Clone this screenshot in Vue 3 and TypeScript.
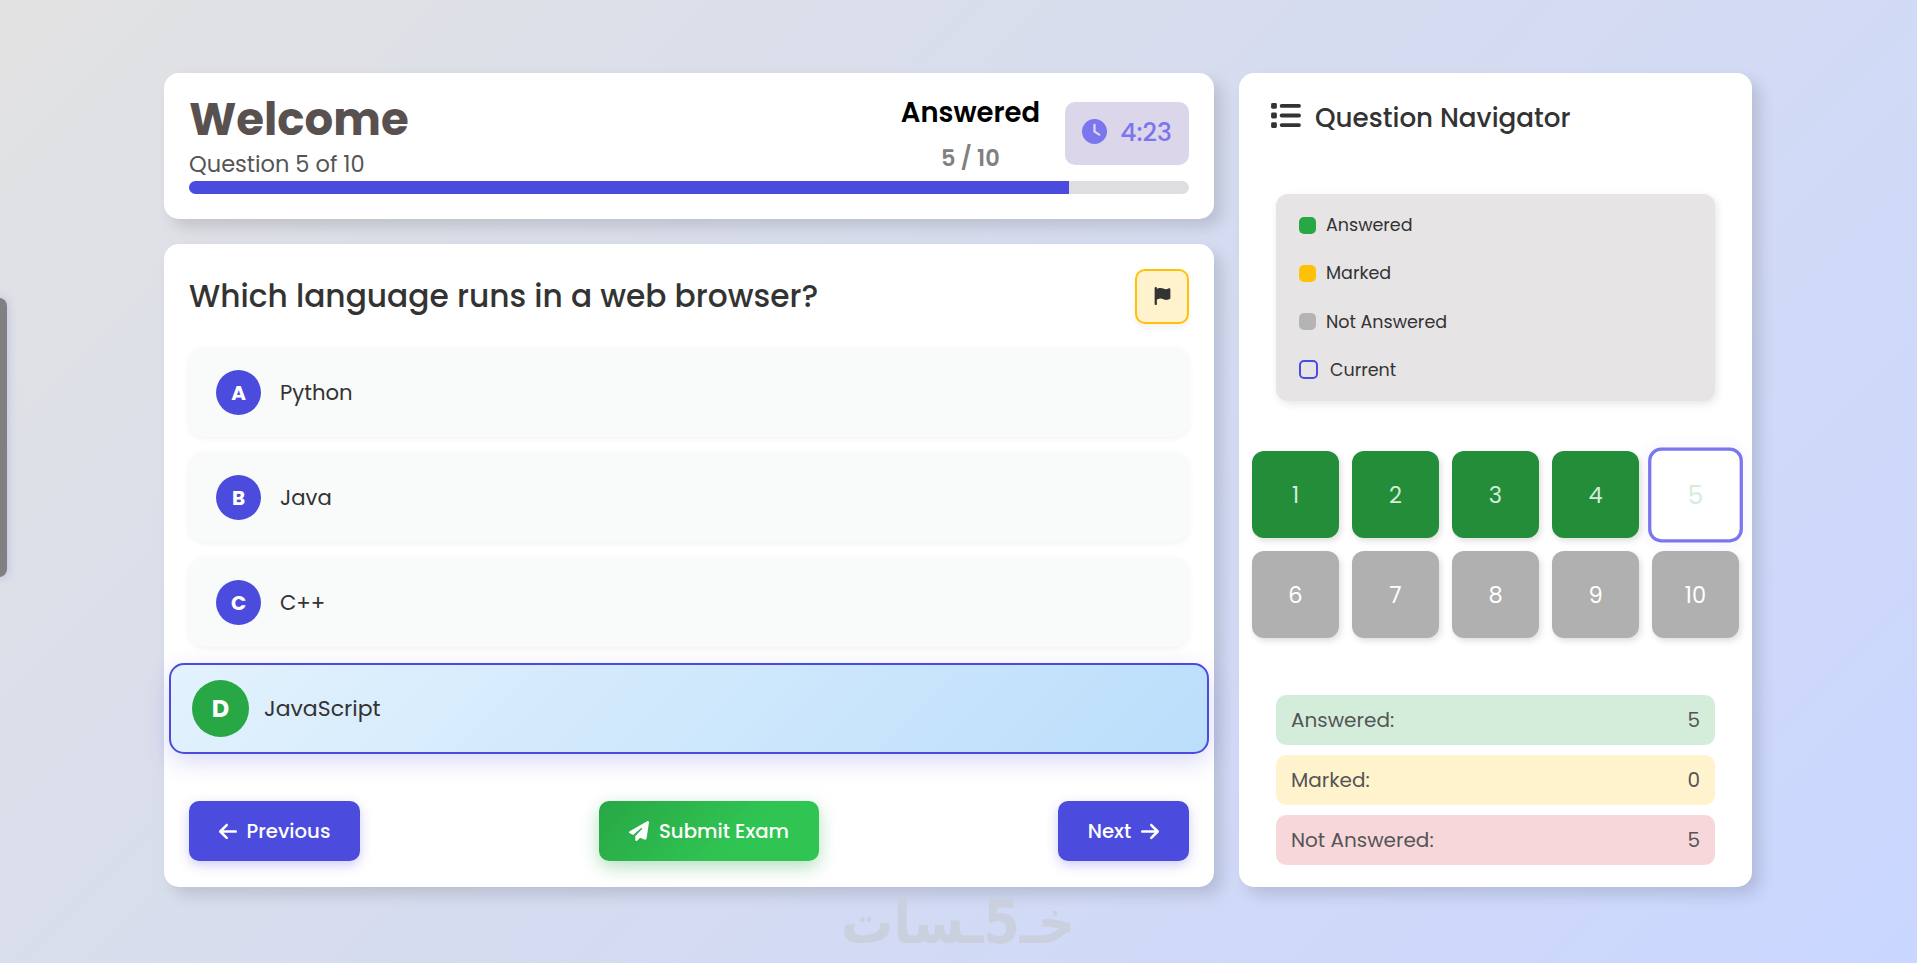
<script setup lang="ts">
import { computed, ref } from 'vue'

/* ---- Types ---- */
type Status = 'answered' | 'marked' | 'empty'

interface Option {
  key: string
  text: string
}

interface Question {
  id: number
  status: Status
}

/* ---- State ---- */
const current = ref(5)
const selected = ref('D')
const secondsLeft = ref(263)
const timePercent = ref(88)

const options: Option[] = [
  { key: 'A', text: 'Python' },
  { key: 'B', text: 'Java' },
  { key: 'C', text: 'C++' },
  { key: 'D', text: 'JavaScript' },
]

const questions = ref<Question[]>(
  Array.from({ length: 10 }, (_, i) => ({ id: i + 1, status: i < 5 ? 'answered' : 'empty' })),
)

const legend = [
  { cls: 'answered', label: 'Answered' },
  { cls: 'marked', label: 'Marked' },
  { cls: 'empty', label: 'Not Answered' },
  { cls: 'current', label: 'Current' },
]

/* ---- Derived ---- */
const countBy = (s: Status) => questions.value.filter(q => q.status === s).length

const stats = computed(() => [
  { cls: 'answered', label: 'Answered:', value: countBy('answered') },
  { cls: 'marked', label: 'Marked:', value: countBy('marked') },
  { cls: 'empty', label: 'Not Answered:', value: countBy('empty') },
])

const timeText = computed(() => {
  const s = secondsLeft.value
  return `${Math.floor(s / 60)}:${String(s % 60).padStart(2, '0')}`
})
</script>

<template>
  <div class="page">
    <div class="side-handle"></div>

    <div class="exam">
      <main class="main-col">
        <!-- Header -->
        <header class="card header">
          <div class="header-row">
            <div class="intro">
              <h1 class="welcome">Welcome</h1>
              <p class="position">Question {{ current }} of {{ questions.length }}</p>
            </div>
            <div class="score">
              <span class="score-label">Answered</span>
              <span class="score-value">{{ countBy('answered') }} / {{ questions.length }}</span>
            </div>
            <div class="timer">
              <svg class="timer-icon" viewBox="0 0 512 512"><path d="M256 0a256 256 0 1 1 0 512A256 256 0 1 1 256 0zM232 120l0 136c0 8 4 15.500 10.700 20l96 64c11 7.400 25.900 4.400 33.300-6.700s4.400-25.900-6.700-33.300L280 243.200 280 120c0-13.300-10.700-24-24-24s-24 10.700-24 24z" /></svg>
              <span class="timer-text">{{ timeText }}</span>
            </div>
          </div>
          <div class="progress">
            <div class="progress-fill" :style="{ width: timePercent + '%' }"></div>
          </div>
        </header>

        <!-- Question -->
        <section class="card question">
          <div class="question-head">
            <h2 class="question-title">Which language runs in a web browser?</h2>
            <button class="flag-btn" aria-label="Mark question">
              <svg viewBox="0 0 448 512"><path d="M64 32C64 14.300 49.700 0 32 0S0 14.300 0 32L0 64 0 368 0 480c0 17.700 14.300 32 32 32s32-14.300 32-32l0-128 64.300-16.100c41.100-10.300 84.600-5.500 122.500 13.400c44.200 22.100 95.500 24.800 141.700 7.400l34.700-13c12.500-4.700 20.800-16.600 20.800-30l0-247.700c0-23-24.200-38-44.800-27.700l-9.600 4.800c-46.300 23.200-100.800 23.200-147.100 0c-35.100-17.600-75.400-22-113.500-12.500L64 48l0-16z" /></svg>
            </button>
          </div>

          <div class="options">
            <div
              v-for="option in options"
              :key="option.key"
              class="option"
              :class="{ selected: option.key === selected }"
              @click="selected = option.key"
            >
              <span class="option-key">{{ option.key }}</span>
              <span class="option-text">{{ option.text }}</span>
            </div>
          </div>

          <div class="actions">
            <button class="btn" @click="current = Math.max(1, current - 1)">
              <svg class="arrow" viewBox="0 0 448 512"><path d="M9.400 233.400c-12.500 12.500-12.500 32.800 0 45.300l160 160c12.500 12.500 32.800 12.500 45.300 0s12.500-32.800 0-45.300L109.200 288 416 288c17.700 0 32-14.300 32-32s-14.300-32-32-32l-306.700 0L214.600 118.600c12.500-12.500 12.500-32.800 0-45.300s-32.800-12.500-45.300 0l-160 160z" /></svg>
              <span>Previous</span>
            </button>
            <button class="btn submit">
              <svg class="plane" viewBox="0 0 512 512"><path d="M498.100 5.600c10.100 7 15.400 19.100 13.500 31.200l-64 416c-1.500 9.700-7.400 18.200-16 23s-18.900 5.400-28 1.600L284 427.700l-68.500 74.100c-8.900 9.700-22.900 12.900-35.200 8.100S160 493.200 160 480V396.400c0-4 1.500-7.800 4.200-10.700L331.800 202.800c5.800-6.300 5.600-16-.4-22s-15.700-6.400-22-.7L106 360.800 17.700 316.600C7.100 311.300 .3 300.700 0 288.900s5.900-22.800 16.100-28.700l448-256c10.700-6.100 23.900-5.500 34 1.400z" /></svg>
              <span>Submit Exam</span>
            </button>
            <button class="btn next" @click="current = Math.min(questions.length, current + 1)">
              <span>Next</span>
              <svg class="arrow" viewBox="0 0 448 512"><path d="M438.600 278.600c12.500-12.500 12.500-32.800 0-45.300l-160-160c-12.500-12.500-32.800-12.500-45.300 0s-12.500 32.800 0 45.300L338.800 224 32 224c-17.700 0-32 14.300-32 32s14.300 32 32 32l306.700 0L233.400 393.400c-12.500 12.500-12.500 32.800 0 45.300s32.800 12.500 45.300 0l160-160z" /></svg>
            </button>
          </div>
        </section>
      </main>

      <!-- Navigator -->
      <aside class="card navigator">
        <div class="nav-head">
          <svg class="list-icon" viewBox="16 48 496 416">
            <rect x="16" y="48" width="96" height="96" rx="24" />
            <rect x="16" y="208" width="96" height="96" rx="24" />
            <rect x="16" y="368" width="96" height="96" rx="24" />
            <rect x="160" y="64" width="352" height="64" rx="32" />
            <rect x="160" y="224" width="352" height="64" rx="32" />
            <rect x="160" y="384" width="352" height="64" rx="32" />
          </svg>
          <h3 class="nav-title">Question Navigator</h3>
        </div>

        <div class="legend">
          <div v-for="item in legend" :key="item.cls" class="legend-item">
            <i class="swatch" :class="item.cls"></i>
            <span class="legend-label">{{ item.label }}</span>
          </div>
        </div>

        <div class="grid">
          <button
            v-for="q in questions"
            :key="q.id"
            class="cell"
            :class="[q.status, { current: q.id === current }]"
            @click="current = q.id"
          >{{ q.id }}</button>
        </div>

        <div class="stats">
          <div v-for="s in stats" :key="s.cls" class="stat" :class="s.cls">
            <span>{{ s.label }}</span>
            <span>{{ s.value }}</span>
          </div>
        </div>
      </aside>
    </div>

    <svg class="watermark" viewBox="0 0 230 60">
      <text x="115" y="45" text-anchor="middle" textLength="234" lengthAdjust="spacingAndGlyphs">خـ5ـسات</text>
    </svg>
  </div>
</template>

<style>
body {
  margin: 0;
  overflow: hidden;
}
</style>

<style scoped>
.page {
  --primary: #4b4bdd;
  --green: #28a745;
  --yellow: #ffc107;

  position: relative;
  box-sizing: border-box;
  height: 963px;
  padding: 73px 165px 0 164px;
  overflow: hidden;
  background: linear-gradient(135deg, #e2e2e2, #c9d6ff);
  font-family: Poppins, Inter, 'Open Sans', sans-serif;
  color: #333;
}

.page *,
.page *::before {
  box-sizing: border-box;
}

h1,
h2,
h3,
p {
  margin: 0;
}

button {
  border: none;
  font-family: inherit;
  cursor: pointer;
}

svg {
  fill: currentColor;
  flex: none;
}

/* Drawer edge peeking in from the left */
.side-handle {
  position: absolute;
  left: -10px;
  top: 298px;
  width: 17px;
  height: 279px;
  border-radius: 8px;
  background: #808080;
  box-shadow: 0 0 10px rgba(75, 75, 221, 0.25);
}

.exam {
  display: grid;
  grid-template-columns: 1050px 513px;
  gap: 25px;
}

.main-col {
  display: flex;
  flex-direction: column;
  gap: 25px;
}

.card {
  background: #fff;
  border-radius: 15px;
  box-shadow: 8px 8px 15px rgba(0, 0, 0, 0.13);
}

/* Header */
.header {
  height: 146px;
  padding: 25px;
}

.header-row {
  display: flex;
  align-items: flex-start;
  height: 83px;
}

.intro {
  flex: 1;
}

.welcome {
  margin-top: -3px;
  font-size: 45px;
  line-height: 50px;
  font-weight: 700;
  color: #585150;
}

.position {
  margin-top: 5px;
  font-size: 22.5px;
  line-height: 29px;
  color: #555;
}

.score {
  display: flex;
  flex-direction: column;
  align-items: center;
  margin-right: 25px;
  font-weight: 600;
}

.score-label {
  font-size: 27.4px;
  line-height: 30px;
  color: #000;
}

.score-value {
  margin-top: 17px;
  font-size: 22.5px;
  line-height: 26px;
  color: #808080;
}

.timer {
  display: flex;
  justify-content: center;
  width: 124px;
  height: 63px;
  margin-top: 4px;
  padding-top: 17px;
  gap: 13px;
  border-radius: 10px;
  background: #dcd6eb;
  color: #7b75ee;
}

.timer-icon {
  width: 25px;
  height: 25px;
}

.timer-text {
  font-size: 25px;
  line-height: 28px;
  font-weight: 500;
}

.progress {
  height: 13px;
  border-radius: 7px;
  background: #dedee0;
  overflow: hidden;
}

.progress-fill {
  height: 100%;
  background: var(--primary);
}

/* Question */
.question {
  height: 643px;
  padding: 25px;
}

.question-head {
  display: flex;
  align-items: center;
  justify-content: space-between;
  height: 55px;
}

.question-title {
  margin-bottom: 2px;
  font-size: 31.25px;
  line-height: 36px;
  font-weight: 500;
}

.flag-btn {
  display: flex;
  align-items: center;
  justify-content: center;
  width: 54px;
  height: 55px;
  padding: 0 0 2px;
  border: 2px solid var(--yellow);
  border-radius: 10px;
  background: #fff3cd;
  color: #333;
  box-shadow: 0 4px 6px rgba(0, 0, 0, 0.05);
}

.flag-btn svg {
  width: 17px;
  height: 18px;
}

.options {
  display: flex;
  flex-direction: column;
  gap: 16px;
  margin-top: 24px;
}

.option {
  display: flex;
  align-items: center;
  height: 89px;
  padding: 0 27px;
  gap: 19px;
  border-radius: 15px;
  background: #f9fafa;
  box-shadow: 0 1px 6px rgba(0, 0, 0, 0.06);
  cursor: pointer;
}

.option-key {
  display: flex;
  align-items: center;
  justify-content: center;
  width: 45px;
  height: 45px;
  border-radius: 50%;
  background: var(--primary);
  color: #fff;
  font-size: 20px;
  font-weight: 700;
}

.option-text {
  font-size: 21.2px;
}

.option.selected {
  height: 91px;
  margin: 0 -20px;
  padding: 0 21px;
  gap: 15px;
  border: 2px solid var(--primary);
  background: linear-gradient(135deg, #e3f2fd, #bbdefb);
  box-shadow: 0 8px 25px rgba(75, 75, 221, 0.2);
}

.selected .option-key {
  width: 57px;
  height: 57px;
  background: var(--green);
  font-size: 24px;
}

.selected .option-text {
  font-size: 22px;
}

.actions {
  display: flex;
  justify-content: space-between;
  margin-top: 47px;
}

.btn {
  display: flex;
  align-items: center;
  justify-content: center;
  width: 171px;
  height: 60px;
  padding: 0;
  gap: 10px;
  border-radius: 10px;
  background: var(--primary);
  color: #fff;
  font-size: 19.7px;
  font-weight: 500;
  box-shadow: 0 4px 12px rgba(75, 75, 221, 0.28);
}

.btn.submit {
  width: 220px;
  background: linear-gradient(135deg, #28a745, #30c553 65%);
  box-shadow: 0 6px 18px rgba(40, 167, 69, 0.35);
}

.btn.next {
  width: 131px;
}

.arrow {
  width: 18px;
  height: 21px;
}

.plane {
  width: 20px;
  height: 20px;
}

/* Navigator */
.navigator {
  display: flex;
  flex-direction: column;
  height: 814px;
}

.nav-head {
  display: flex;
  align-items: flex-start;
  height: 121px;
  padding: 30px 32px 0;
  gap: 14px;
}

.list-icon {
  width: 30px;
  height: 25px;
}

.nav-title {
  font-size: 26.2px;
  line-height: 30px;
  font-weight: 500;
}

.legend {
  display: flex;
  flex-direction: column;
  height: 207px;
  margin: 0 37px;
  padding: 7px 23px;
  border-radius: 12px;
  background: #e6e4e5;
  box-shadow: 2px 3px 8px rgba(0, 0, 0, 0.1);
}

.legend-item {
  display: flex;
  align-items: center;
  height: 48.4px;
  gap: 10px;
}

.swatch {
  width: 17px;
  height: 17px;
  border-radius: 5px;
}

.swatch.answered {
  background: var(--green);
}

.swatch.marked {
  background: var(--yellow);
}

.swatch.empty {
  background: #b4b4b6;
}

.swatch.current {
  width: 19px;
  height: 19px;
  margin-right: 2px;
  border: 2px solid var(--primary);
}

.legend-label {
  font-size: 17.5px;
}

.grid {
  display: grid;
  grid-template-columns: repeat(5, 87px);
  gap: 13px;
  margin: 50px 13px 0;
}

.cell {
  height: 87px;
  padding: 0;
  border-radius: 12px;
  font-size: 22.5px;
  box-shadow: 2px 3px 6px rgba(0, 0, 0, 0.13);
}

.cell.answered {
  background: #238d3a;
  color: #d4edda;
}

.cell.marked {
  background: var(--yellow);
  color: #333;
}

.cell.empty {
  background: #b0b0b0;
  color: #fff;
}

.cell.current {
  background: #fff;
  border: 3px solid #7b75ee;
  transform: translateY(0.5px) scale(1.09);
  box-shadow: 0 0 14px rgba(75, 75, 221, 0.07);
}

.stats {
  display: flex;
  flex-direction: column;
  gap: 10px;
  margin: 57px 37px 0;
}

.stat {
  display: flex;
  align-items: center;
  justify-content: space-between;
  height: 50px;
  padding: 0 15px;
  border-radius: 10px;
  font-size: 20px;
  color: #555;
}

.stat.answered {
  background: #d4edda;
}

.stat.marked {
  background: #fff3cd;
}

.stat.empty {
  background: #f8d7da;
}

.watermark {
  position: absolute;
  left: 843px;
  top: 898px;
  width: 230px;
  height: 60px;
  overflow: visible;
}

.watermark text {
  font-family: 'DejaVu Sans', sans-serif;
  font-size: 60px;
  font-weight: 700;
  fill: #cbd0de;
}
</style>
